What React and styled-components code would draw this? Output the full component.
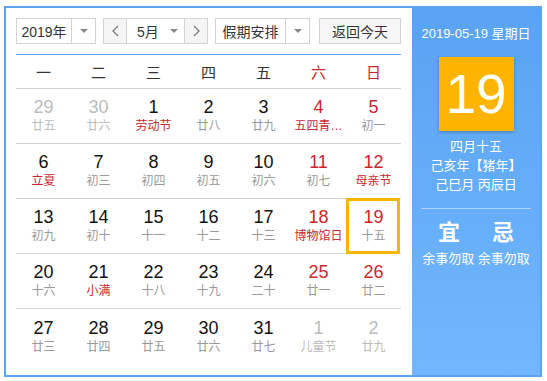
import styled, { createGlobalStyle } from 'styled-components';

const Global = createGlobalStyle`
  body {
    margin: 0;
    background: #fff;
    font-family: "Liberation Sans", "Noto Sans CJK SC", sans-serif;
  }
`;

const Frame = styled.div`
  margin: 6px 0 0 4px;
  width: 534px;
  height: 367px;
  border: 2px solid #5ca4ef;
  display: flex;
`;

const Main = styled.div`
  width: 385px;
  padding: 10px 11px 0 10px;
`;

const Toolbar = styled.div`
  display: flex;
  height: 26px;
  margin-bottom: 10px;
`;

const Select = styled.div`
  width: ${({ w }) => w}px;
  margin-right: ${({ mr }) => mr || 0}px;
  height: 26px;
  box-sizing: border-box;
  border: 1px solid #d3d3d3;
  display: flex;
  font-size: 14px;
  color: #333;
  background: #fff;
  white-space: nowrap;
`;

const SelectText = styled.div`
  flex: 1;
  display: flex;
  align-items: center;
  justify-content: center;
  border-right: ${({ sep }) => (sep ? '1px solid #d3d3d3' : 'none')};
`;

const Caret = styled.div`
  width: ${({ w }) => w || 23}px;
  flex: none;
  display: flex;
  align-items: center;
  justify-content: center;
  &::after {
    content: '';
    border-left: 4px solid transparent;
    border-right: 4px solid transparent;
    border-top: 4px solid #888;
  }
`;

const MonthText = styled.div`
  flex: 1;
  min-width: 0;
  display: flex;
  align-items: center;
  padding-left: 10px;
`;

const Arrow = styled.div`
  width: 22px;
  flex: none;
  background: #f5f5f5;
  display: flex;
  align-items: center;
  justify-content: center;
  border-${({ side }) => side}: 1px solid #d3d3d3;
`;

const Button = styled.div`
  margin-left: auto;
  width: 82px;
  height: 26px;
  box-sizing: border-box;
  border: 1px solid #d3d3d3;
  background: #f6f6f6;
  font-size: 14px;
  color: #333;
  display: flex;
  align-items: center;
  justify-content: center;
`;

const Grid = styled.div`
  border-top: 1px solid #5ca4ef;
  display: grid;
  grid-template-columns: repeat(7, 55px);
`;

const Head = styled.div`
  height: 33px;
  border-bottom: 1px solid #d3d3d3;
  display: flex;
  align-items: center;
  justify-content: center;
  font-size: 15px;
  color: ${({ red }) => (red ? '#c8282d' : '#333')};
`;

const Cell = styled.div`
  height: 55px;
  box-sizing: border-box;
  border-bottom: ${({ last }) => (last ? 'none' : '1px solid #d3d3d3')};
  display: flex;
  flex-direction: column;
  align-items: center;
  justify-content: center;
  position: relative;
  ${({ sel }) => sel && `
    &::before {
      content: '';
      position: absolute;
      left: 0; right: 1px; top: -1px; bottom: -1px;
      border: 3px solid #f8b500;
    }
  `}
`;

const Num = styled.div`
  font-size: 18px;
  line-height: 20px;
  color: ${({ c }) => c};
`;

const Lunar = styled.div`
  font-size: 12px;
  line-height: 18px;
  color: ${({ c }) => c};
  white-space: nowrap;
`;

const Side = styled.div`
  flex: 1;
  background: linear-gradient(#58a3f3, #72b7fd);
  color: #fff;
  display: flex;
  flex-direction: column;
  align-items: center;
`;

const DateLine = styled.div`
  margin-top: 17px;
  font-size: 13px;
  line-height: 18px;
`;

const Big = styled.div`
  margin-top: 14px;
  width: 75px;
  height: 74px;
  background: #ffb400;
  box-shadow: 0 1px 3px rgba(0, 0, 0, 0.25);
  display: flex;
  align-items: center;
  justify-content: center;
  font-size: 55px;
`;

const Info = styled.div`
  margin-top: 6px;
  font-size: 13px;
  line-height: 19px;
  text-align: center;
`;

const Rule = styled.div`
  margin-top: 14px;
  width: 110px;
  height: 1px;
  background: rgba(255, 255, 255, 0.45);
`;

const YiJi = styled.div`
  margin-top: 11px;
  display: flex;
  gap: 32px;
  font-size: 22px;
  font-weight: bold;
  line-height: 26px;
`;

const Advice = styled.div`
  margin-top: 4px;
  font-size: 13px;
  line-height: 18px;
  white-space: nowrap;
`;

const RED = '#c8282d';
const BLACK = '#111';
const GRAY = '#999';
const FADE = '#bbb';

const weeks = ['一', '二', '三', '四', '五', '六', '日'];

const days = [
  ['29', '廿五', 'o'], ['30', '廿六', 'o'], ['1', '劳动节', 'f'], ['2', '廿八'], ['3', '廿九'], ['4', '五四青…', 'rf'], ['5', '初一', 'r'],
  ['6', '立夏', 'f'], ['7', '初三'], ['8', '初四'], ['9', '初五'], ['10', '初六'], ['11', '初七', 'r'], ['12', '母亲节', 'rf'],
  ['13', '初九'], ['14', '初十'], ['15', '十一'], ['16', '十二'], ['17', '十三'], ['18', '博物馆日', 'rf'], ['19', '十五', 'rs'],
  ['20', '十六'], ['21', '小满', 'f'], ['22', '十八'], ['23', '十九'], ['24', '二十'], ['25', '廿一', 'r'], ['26', '廿二', 'r'],
  ['27', '廿三'], ['28', '廿四'], ['29', '廿五'], ['30', '廿六'], ['31', '廿七'], ['1', '儿童节', 'o'], ['2', '廿九', 'o'],
];

const Chevron = ({ dir }) => (
  <svg width="7" height="12" viewBox="0 0 7 12">
    <polyline
      points={dir === 'left' ? '6,1 1,6 6,11' : '1,1 6,6 1,11'}
      fill="none"
      stroke="#777"
      strokeWidth="1.2"
    />
  </svg>
);

const App = () => {
  return (
    <>
      <Global />
      <Frame>
        <Main>
          <Toolbar>
            <Select w={80} mr={7}>
              <SelectText sep>2019年</SelectText>
              <Caret />
            </Select>
            <Select w={105} mr={7}>
              <Arrow side="right"><Chevron dir="left" /></Arrow>
              <MonthText>5月</MonthText>
              <Caret w={20} />
              <Arrow side="left"><Chevron dir="right" /></Arrow>
            </Select>
            <Select w={95}>
              <SelectText sep>假期安排</SelectText>
              <Caret />
            </Select>
            <Button>返回今天</Button>
          </Toolbar>
          <Grid>
            {weeks.map((w, i) => (
              <Head key={w} red={i > 4}>{w}</Head>
            ))}
            {days.map(([n, l, f = ''], i) => {
              const other = f.includes('o');
              const numColor = other ? FADE : f.includes('r') ? RED : BLACK;
              const lunarColor = other ? FADE : f.includes('f') ? RED : GRAY;
              return (
                <Cell key={i} last={i >= 28} sel={f.includes('s')}>
                  <Num c={numColor}>{n}</Num>
                  <Lunar c={lunarColor}>{l}</Lunar>
                </Cell>
              );
            })}
          </Grid>
        </Main>
        <Side>
          <DateLine>2019-05-19 星期日</DateLine>
          <Big>19</Big>
          <Info>
            四月十五
            <br />
            己亥年【猪年】
            <br />
            己巳月 丙辰日
          </Info>
          <Rule />
          <YiJi>
            <span>宜</span>
            <span>忌</span>
          </YiJi>
          <Advice>余事勿取 余事勿取</Advice>
        </Side>
      </Frame>
    </>
  );
};

export default App;
